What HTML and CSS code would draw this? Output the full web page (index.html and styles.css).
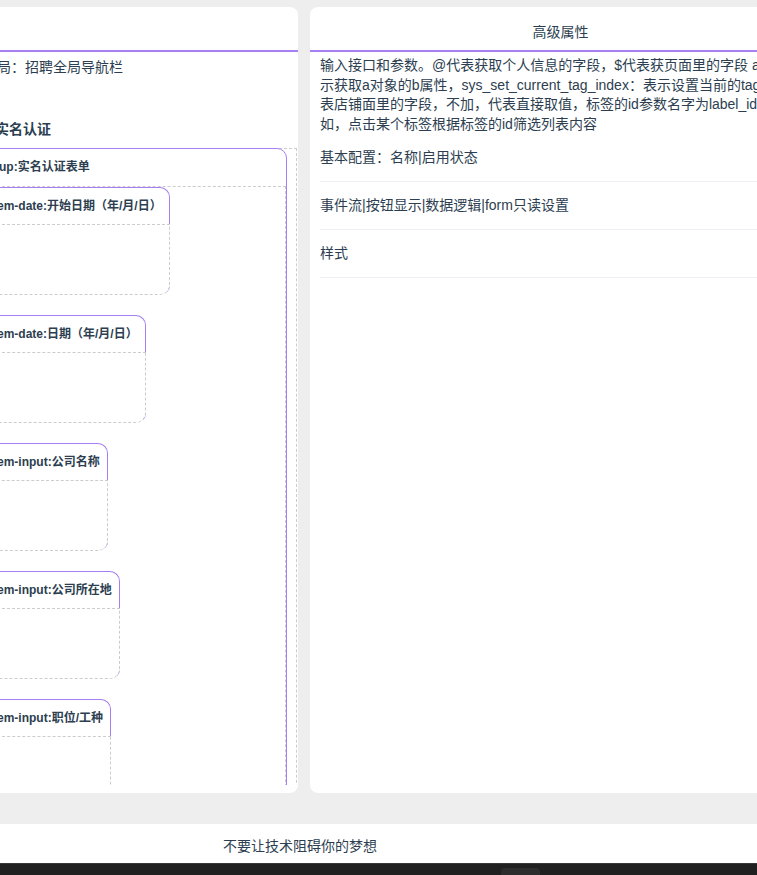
FILE: index.html
```html
<!DOCTYPE html>
<html lang="zh-CN">
<head>
<meta charset="utf-8">
<title>高级属性</title>
<link rel="stylesheet" href="styles.css">
</head>
<body>
<div class="app">
  <main class="workspace">
    <section class="panel panel-left">
      <header class="panel-head"></header>
      <div class="panel-body">
        <div class="lp-desc">局：招聘全局导航栏</div>
        <div class="lp-title">实名认证</div>
        <div class="dropzone">
          <div class="group">
            <div class="group-head">up:实名认证表单</div>
            <div class="group-body">
              <div class="item">
                <div class="item-head">em-date:开始日期（年/月/日）</div>
                <div class="item-body"></div>
              </div>
              <div class="item">
                <div class="item-head">em-date:日期（年/月/日）</div>
                <div class="item-body"></div>
              </div>
              <div class="item">
                <div class="item-head">em-input:公司名称</div>
                <div class="item-body"></div>
              </div>
              <div class="item">
                <div class="item-head">em-input:公司所在地</div>
                <div class="item-body"></div>
              </div>
              <div class="item">
                <div class="item-head">em-input:职位/工种</div>
                <div class="item-body"></div>
              </div>
            </div>
          </div>
        </div>
      </div>
    </section>
    <section class="panel panel-right">
      <header class="panel-head">高级属性</header>
      <div class="panel-body rp-body">
        <p class="rp-desc">输入接口和参数。@代表获取个人信息的字段，$代表获页面里的字段 a.b表<br>示获取a对象的b属性，sys_set_current_tag_index：表示设置当前的tag_index，#代<br>表店铺面里的字段，不加，代表直接取值，标签的id参数名字为label_id，例<br>如，点击某个标签根据标签的id筛选列表内容</p>
        <div class="rp-row">基本配置：名称|启用状态</div>
        <div class="rp-row">事件流|按钮显示|数据逻辑|form只读设置</div>
        <div class="rp-row">样式</div>
      </div>
    </section>
  </main>
  <div class="gap-band"></div>
  <footer class="footer">不要让技术阻碍你的梦想</footer>
  <div class="taskbar"><span class="taskbar-tab"></span></div>
</div>
</body>
</html>
```
FILE: styles.css
```css
html, body {
  margin: 0;
  padding: 0;
}
body {
  width: 757px;
  height: 875px;
  overflow: hidden;
  background: #eeeeee;
  font-family: "Liberation Sans", "Noto Sans CJK SC", sans-serif;
  color: #2c3e50;
}
.app {
  display: flex;
  flex-direction: column;
  width: 757px;
  height: 875px;
}
.workspace {
  display: flex;
  gap: 12px;
  padding-top: 7px;
  height: 786px;
  margin-left: -20px;
  flex-shrink: 0;
}
.panel {
  flex-shrink: 0;
  background: #ffffff;
  border-radius: 8px;
  display: flex;
  flex-direction: column;
  padding-bottom: 8px;
  box-sizing: border-box;
  height: 786px;
  overflow: hidden;
}
.panel-left {
  width: 318px;
}
.panel-right {
  width: 501px;
}
.panel-head {
  flex-shrink: 0;
  height: 35px;
  padding-top: 8px;
  line-height: 35px;
  text-align: center;
  font-size: 14px;
  color: #2c3e50;
  border-bottom: 2px solid #a67ff3;
}
.panel-body {
  flex: 1;
  overflow: hidden;
}
.panel-left .panel-body {
  padding: 5px 1px 0 0;
}
.lp-desc {
  font-size: 14px;
  line-height: 20px;
  padding-left: 17px;
  white-space: nowrap;
}
.lp-title {
  font-size: 14px;
  font-weight: bold;
  line-height: 20px;
  margin-top: 42px;
  padding-left: 15px;
  white-space: nowrap;
}
.dropzone {
  margin-top: 9px;
  border: 1px dashed #cccccc;
  border-bottom: none;
  padding-right: 9px;
}
.group {
  border: 1px solid #a67ff3;
  border-radius: 10px;
  margin-top: -1px;
}
.group-head {
  height: 37px;
  line-height: 37px;
  font-size: 12px;
  font-weight: bold;
  padding-left: 17px;
  white-space: nowrap;
}
.group-body {
  border-top: 1px dashed #cccccc;
  border-right: 1px dashed #cccccc;
  padding: 0 0 20px 4px;
}
.item {
  width: fit-content;
  border: 1px solid #a67ff3;
  border-bottom: 1px dashed #cccccc;
  border-radius: 10px;
  margin-bottom: 20px;
  background: #ffffff;
}
.item-head {
  height: 36px;
  line-height: 36px;
  font-size: 12px;
  font-weight: bold;
  padding: 0 7px 0 10px;
  white-space: nowrap;
}
.item-body {
  height: 69px;
  border-top: 1px dashed #cccccc;
  border-right: 1px dashed #cccccc;
  margin-right: -1px;
  background: #ffffff;
  border-bottom-right-radius: 9px;
}
.rp-body {
  padding: 4px 10px 0;
}
.rp-desc {
  margin: 0;
  font-size: 14px;
  line-height: 19.5px;
  white-space: nowrap;
}
.rp-row {
  height: 47px;
  line-height: 47px;
  font-size: 14px;
  border-bottom: 1px solid #ebeef5;
  white-space: nowrap;
}
.gap-band {
  height: 31px;
  flex-shrink: 0;
}
.footer {
  flex-shrink: 0;
  height: 39px;
  line-height: 44px;
  background: #ffffff;
  font-size: 14px;
  color: #2c3e50;
  text-align: center;
  padding-right: 157px;
}
.taskbar {
  flex: 1;
  background: #202020;
  border-top: 1px solid #383838;
  display: flex;
  align-items: flex-end;
}
.taskbar-tab {
  margin-left: 501px;
  width: 39px;
  height: 7px;
  background: #2d2d2d;
  border-radius: 4px 4px 0 0;
}
```
